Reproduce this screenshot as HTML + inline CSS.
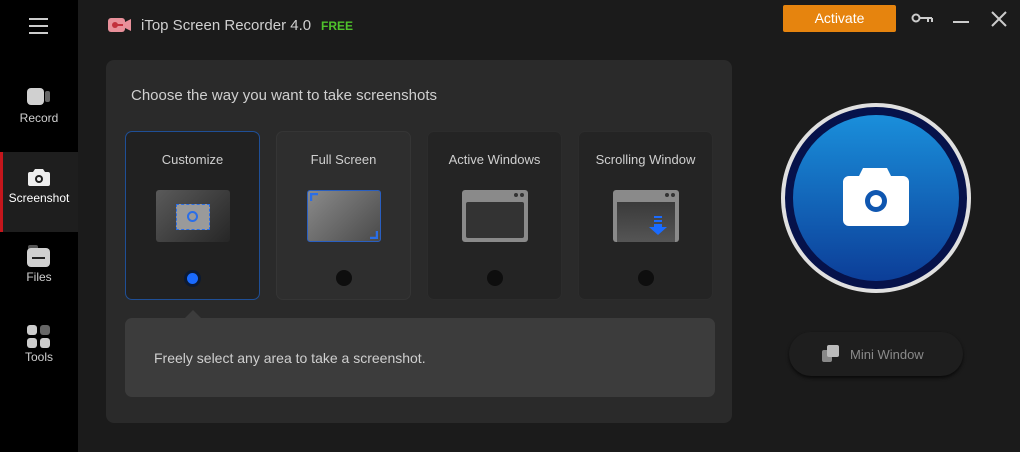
<!DOCTYPE html><html><head><style>
body{margin:0;width:1020px;height:452px;background:#1b1b1b;font-family:"Liberation Sans",sans-serif;position:relative;overflow:hidden}
.a{position:absolute}
.side{left:0;top:0;width:78px;height:452px;background:#000}
.nav{left:0;width:78px;text-align:center;color:#d0d0d0;font-size:12px}
.card{position:absolute;top:131px;width:135px;height:169px;border-radius:7px;background:#242424;box-sizing:border-box;border:1px solid #2c2c2c;color:#cfcfcf;font-size:13px;text-align:center}
.card .t{margin-top:20px}
.dot{position:absolute;left:59px;top:138px;width:16px;height:16px;border-radius:50%;background:#0e0e0e}
.ic{position:absolute;left:30px;top:58px;width:74px;height:52px;border-radius:3px}
.wd{position:absolute;top:61px;width:4px;height:4px;border-radius:50%;background:#333}
</style></head><body>
<div class="a side"></div>
<div class="a" style="left:29px;top:18px;width:19px;height:2px;background:#ccc;box-shadow:0 7px 0 #ccc,0 14px 0 #ccc"></div>
<div class="a" style="left:27px;top:88px;width:17px;height:17px;background:#d0d0d0;border-radius:4px"></div>
<div class="a" style="left:45px;top:91px;width:5px;height:11px;background:#666;border-radius:2px"></div>
<div class="a nav" style="top:111px">Record</div>
<div class="a" style="left:0;top:152px;width:78px;height:80px;background:#1e1e1e"></div>
<div class="a" style="left:0;top:152px;width:3px;height:80px;background:#c4161c"></div>
<svg class="a" style="left:27px;top:166px" width="24" height="22"><path d="M8 3h8l2 3h3a2 2 0 0 1 2 2v10a2 2 0 0 1-2 2H3a2 2 0 0 1-2-2V8a2 2 0 0 1 2-2h3z" fill="#eee"/><circle cx="12" cy="13" r="4" fill="#1e1e1e"/><circle cx="12" cy="13" r="2" fill="#eee"/></svg>
<div class="a nav" style="top:191px;color:#fff">Screenshot</div>
<div class="a" style="left:28px;top:245px;width:10px;height:5px;background:#555;border-radius:2px"></div>
<div class="a" style="left:27px;top:248px;width:23px;height:19px;background:#d0d0d0;border-radius:4px"></div>
<div class="a" style="left:32px;top:257px;width:13px;height:2px;background:#222"></div>
<div class="a nav" style="top:270px">Files</div>
<div class="a" style="left:27px;top:325px;width:10px;height:10px;background:#ccc;border-radius:3px"></div>
<div class="a" style="left:40px;top:325px;width:10px;height:10px;background:#666;border-radius:3px"></div>
<div class="a" style="left:27px;top:338px;width:10px;height:10px;background:#ccc;border-radius:3px"></div>
<div class="a" style="left:40px;top:338px;width:10px;height:10px;background:#ccc;border-radius:3px"></div>
<div class="a nav" style="top:350px">Tools</div>
<svg class="a" style="left:107px;top:16px" width="26" height="18"><rect x="1" y="2" width="17" height="14" rx="3" fill="#e8909a"/><circle cx="8" cy="9" r="3" fill="#c2303c"/><path d="M10 9h6" stroke="#c2303c" stroke-width="2"/><path d="M18 6l6-3v12l-6-3z" fill="#e8909a"/></svg>
<div class="a" style="left:141px;top:17px;color:#cfcfcf;font-size:15px">iTop Screen Recorder 4.0</div>
<div class="a" style="left:321px;top:19px;color:#4fc22b;font-size:12px;font-weight:bold">FREE</div>
<div class="a" style="left:783px;top:5px;width:113px;height:27px;background:#e6840e;color:#fff;font-size:14px;text-align:center;line-height:27px;border-radius:2px">Activate</div>
<svg class="a" style="left:911px;top:11px" width="24" height="14"><circle cx="5" cy="7" r="3.5" fill="none" stroke="#ccc" stroke-width="2"/><path d="M9 7h12M17 7v4M21 7v4" stroke="#ccc" stroke-width="2"/></svg>
<div class="a" style="left:953px;top:21px;width:16px;height:2px;background:#ccc"></div>
<svg class="a" style="left:991px;top:11px" width="16" height="16"><path d="M1 1l14 14M15 1L1 15" stroke="#ccc" stroke-width="2"/></svg>
<div class="a" style="left:106px;top:60px;width:626px;height:363px;background:#2a2a2a;border-radius:8px"></div>
<div class="a" style="left:131px;top:87px;color:#cfcfcf;font-size:15px">Choose the way you want to take screenshots</div>
<div class="card" style="left:125px;background:#212121;border-color:#1f4f96"><div class="t">Customize</div>
<div class="ic" style="background:linear-gradient(135deg,#5a5a5a,#262626)"></div>
<div class="a" style="left:50px;top:72px;width:32px;height:24px;background:#9a9a9a;border:1px dashed #2a6ee8"></div>
<div class="a" style="left:61px;top:79px;width:7px;height:7px;border:2px solid #2a6ee8;border-radius:50%"></div>
<div class="dot" style="background:#1a6bff;box-shadow:0 0 0 3px #0b1a33;left:61px;top:141px;width:11px;height:11px"></div></div>
<div class="card" style="left:276px;background:#2e2e2e;border-color:#353535"><div class="t">Full Screen</div>
<div class="ic" style="background:linear-gradient(135deg,#8a8a8a,#4a4a4a);border:1px solid #2a5fc0;box-sizing:border-box"></div>
<svg class="a" style="left:33px;top:61px" width="68" height="46"><path d="M1 8V1h7M67 38v7h-7" stroke="#2a6ee8" stroke-width="2.5" fill="none"/></svg>
<div class="dot"></div></div>
<div class="card" style="left:427px"><div class="t">Active Windows</div>
<div class="ic" style="left:34px;width:66px;background:#8a8a8a"></div>
<div class="wd" style="left:86px"></div><div class="wd" style="left:92px"></div>
<div class="a" style="left:38px;top:70px;width:58px;height:36px;background:#333;border-radius:2px"></div>
<div class="dot"></div></div>
<div class="card" style="left:578px"><div class="t">Scrolling Window</div>
<div class="ic" style="left:34px;width:66px;background:#8a8a8a"></div>
<div class="wd" style="left:86px"></div><div class="wd" style="left:92px"></div>
<div class="a" style="left:38px;top:70px;width:58px;height:40px;background:linear-gradient(#3a3a3a,#555)"></div>
<svg class="a" style="left:70px;top:84px" width="18" height="20"><path d="M5 0h8v2H5zM5 4h8v2H5zM5 8h8v3h5l-9 8-9-8h5z" fill="#1a6bff"/></svg>
<div class="dot"></div></div>
<div class="a" style="left:185px;top:310px;width:0;height:0;border:8px solid transparent;border-bottom-color:#3c3c3c;border-top:0"></div>
<div class="a" style="left:125px;top:318px;width:590px;height:79px;background:#3c3c3c;border-radius:7px"></div>
<div class="a" style="left:154px;top:350px;color:#cfcfcf;font-size:14px">Freely select any area to take a screenshot.</div>
<div class="a" style="left:781px;top:103px;width:190px;height:190px;border-radius:50%;background:#e0e0e0"></div>
<div class="a" style="left:785px;top:107px;width:182px;height:182px;border-radius:50%;background:#06124a"></div>
<div class="a" style="left:793px;top:115px;width:166px;height:166px;border-radius:50%;background:linear-gradient(#1a8fdb,#0c3e98)"></div>
<svg class="a" style="left:843px;top:168px" width="66" height="58"><path d="M20 0h24l4 8h12a6 6 0 0 1 6 6v38a6 6 0 0 1-6 6H6a6 6 0 0 1-6-6V14a6 6 0 0 1 6-6h10z" fill="#fff"/><circle cx="33" cy="33" r="11" fill="#0f56b0"/><circle cx="33" cy="33" r="6" fill="#fff"/></svg>
<div class="a" style="left:789px;top:332px;width:174px;height:44px;border-radius:22px;background:#1e1e1e;box-shadow:0 2px 3px #0a0a0a"></div>
<div class="a" style="left:822px;top:350px;width:10px;height:12px;background:#888;border-radius:2px"></div>
<div class="a" style="left:827px;top:345px;width:12px;height:12px;background:#bbb;border-radius:2px"></div>
<div class="a" style="left:850px;top:347px;color:#8a8a8a;font-size:13px">Mini Window</div>
</body></html>
